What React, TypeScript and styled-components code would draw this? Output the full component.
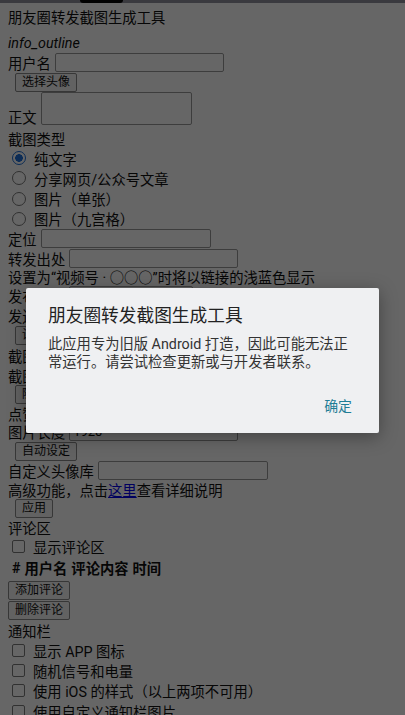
import styled, { createGlobalStyle } from "styled-components";

const GlobalStyle = createGlobalStyle`
  html, body {
    margin: 0;
    padding: 0;
    background: #ffffff;
    overflow: hidden;
  }
  body {
    font-family: Roboto, "Noto Sans CJK SC", sans-serif;
    font-size: 14.3px;
    color: #111111;
  }
`;

const radios = ["纯文字", "分享网页/公众号文章", "图片（单张）", "图片（九宫格）"];
const noticeOptions = [
  "显示 APP 图标",
  "随机信号和电量",
  "使用 iOS 的样式（以上两项不可用）",
  "使用自定义通知栏图片",
];

export default function App() {
  return (
    <>
      <GlobalStyle />
      <Page>
        <StatusStrip>
          <Notch />
        </StatusStrip>
        <Content>
          <Title>朋友圈转发截图生成工具</Title>
          <IconText>info_outline</IconText>

          <Row $h={19}>
            用户名<TextInput $w={169} />
          </Row>
          <Row $h={20}>
            <Button $indent={7}>选择头像</Button>
          </Row>
          <Row $h={36} $align="flex-end">
            <LabelLine>正文</LabelLine>
            <TextArea />
          </Row>

          <Row $h={20}>截图类型</Row>
          {radios.map((r, i) => (
            <Row key={r} $h={20.25}>
              <Radio type="radio" name="kind" defaultChecked={i === 0} />
              {r}
            </Row>
          ))}

          <Row $h={19.5}>
            定位<TextInput $w={170} />
          </Row>
          <Row $h={19.5}>
            转发出处<TextInput $w={169} />
          </Row>
          <Row $h={17}>设置为“视频号 · ○○○”时将以链接的浅蓝色显示</Row>
          <Row $h={20}>
            发布时间<TextInput $w={124} />
          </Row>
          <Row $h={20}>
            发送设备<TextInput $w={169} />
          </Row>
          <Row $h={20}>
            <Button $indent={7}>设为当前时间</Button>
          </Row>
          <Row $h={20}>
            截图时间<TextInput $w={124} />
          </Row>
          <Row $h={20}>
            截图电量<TextInput $w={169} />
          </Row>
          <Row $h={19}>
            <Button $indent={7}>随机生成</Button>
          </Row>
          <Row $h={18}>
            点赞列表<TextInput $w={169} />
          </Row>
          <Row $h={19}>
            图片长度<TextInput $w={169} defaultValue="1920" />
          </Row>
          <Row $h={20}>
            <Button $indent={7}>自动设定</Button>
          </Row>
          <Row $h={19}>
            自定义头像库<TextInput $w={170} />
          </Row>
          <Row $h={19}>
            高级功能，点击<Link href="#">这里</Link>查看详细说明
          </Row>
          <Row $h={19}>
            <Button $indent={7}>应用</Button>
          </Row>

          <Row $h={19}>评论区</Row>
          <Row $h={18}>
            <Checkbox type="checkbox" />
            显示评论区
          </Row>
          <TableHead>
            <span>#</span>
            <span>用户名</span>
            <span>评论内容</span>
            <span>时间</span>
          </TableHead>
          <Row $h={20}>
            <Button>添加评论</Button>
          </Row>
          <Row $h={20}>
            <Button>删除评论</Button>
          </Row>

          <Row $h={20}>通知栏</Row>
          {noticeOptions.map((o) => (
            <Row key={o} $h={20.3}>
              <Checkbox type="checkbox" />
              {o}
            </Row>
          ))}
        </Content>

        <Backdrop>
          <Dialog>
            <DialogTitle>朋友圈转发截图生成工具</DialogTitle>
            <DialogMessage>
              此应用专为旧版 Android 打造，因此可能无法正常运行。请尝试检查更新或与开发者联系。
            </DialogMessage>
            <DialogActions>
              <DialogButton>确定</DialogButton>
            </DialogActions>
          </Dialog>
        </Backdrop>
      </Page>
    </>
  );
}

const Page = styled.div`
  position: relative;
  width: 405px;
  height: 715px;
  overflow: hidden;
`;

const StatusStrip = styled.div`
  display: flex;
  height: 3px;
  background: #91919f;
`;

const Notch = styled.div`
  width: 43px;
  margin-left: 80px;
  background: #000;
  border-radius: 0 0 4px 4px;
`;

const Content = styled.div`
  padding: 0 8px;
`;

const Title = styled.div`
  margin-top: 5px;
  line-height: 20px;
`;

const IconText = styled.i`
  display: block;
  margin-top: 5px;
  line-height: 20px;
`;

const Row = styled.div<{ $h: number; $align?: string }>`
  display: flex;
  align-items: ${(p) => p.$align ?? "center"};
  height: ${(p) => p.$h}px;
  white-space: nowrap;
`;

const LabelLine = styled.span`
  line-height: 20px;
`;

const TextInput = styled.input<{ $w: number }>`
  box-sizing: border-box;
  width: ${(p) => p.$w}px;
  height: 19px;
  margin: 0 0 0 4px;
  padding: 0 3px;
  border: 1px solid #9a9a9a;
  border-radius: 2px;
  background: #fff;
  font-family: Roboto, "Noto Sans CJK SC", sans-serif;
  font-size: 13px;
  color: #111;
`;

const TextArea = styled.textarea`
  box-sizing: border-box;
  width: 151px;
  height: 33px;
  margin: 0 0 3px 4px;
  border: 1px solid #9a9a9a;
  border-radius: 2px;
  resize: none;
`;

const Button = styled.button<{ $indent?: number }>`
  box-sizing: border-box;
  height: 19px;
  margin: 0 0 0 ${(p) => p.$indent ?? 0}px;
  padding: 0 6px;
  border: 1px solid #8a8a8a;
  border-radius: 2px;
  background: #f4f4f4;
  font-family: Roboto, "Noto Sans CJK SC", sans-serif;
  font-size: 12px;
  line-height: 17px;
  color: #111;
`;

const Radio = styled.input`
  appearance: none;
  box-sizing: border-box;
  width: 14px;
  height: 14px;
  margin: 0 8px 0 4px;
  border: 1px solid #7a7a7a;
  border-radius: 50%;
  background: #fff;

  &:checked {
    border: 1.5px solid #1f6fd6;
    background: radial-gradient(circle, #1f6fd6 0 3.6px, #fff 4px);
  }
`;

const Checkbox = styled.input`
  appearance: none;
  box-sizing: border-box;
  width: 13px;
  height: 13px;
  margin: 0 8px 0 4px;
  border: 1px solid #7a7a7a;
  border-radius: 2px;
  background: #fff;
`;

const Link = styled.a`
  color: #0000ee;
  text-decoration: underline;
`;

const TableHead = styled.div`
  display: flex;
  gap: 4px;
  align-items: center;
  height: 25px;
  padding-left: 4px;
  font-weight: 700;
`;

const Backdrop = styled.div`
  position: absolute;
  inset: 0;
  display: flex;
  align-items: center;
  justify-content: center;
  padding-top: 6px;
  background: rgba(0, 0, 0, 0.6);
`;

const Dialog = styled.div`
  display: flex;
  flex-direction: column;
  width: 353px;
  height: 145px;
  background: #eff0f2;
  border-radius: 2px;
  box-shadow: 0 4px 18px rgba(0, 0, 0, 0.35);
`;

const DialogTitle = styled.div`
  padding: 17px 24px 0 22px;
  font-size: 17.7px;
  line-height: 22px;
  color: #222;
`;

const DialogMessage = styled.div`
  margin-top: 9px;
  padding: 0 27px 0 22px;
  font-size: 14.3px;
  line-height: 17.5px;
  color: #333;
`;

const DialogActions = styled.div`
  display: flex;
  justify-content: flex-end;
  margin-top: auto;
  padding: 0 27px 10px;
`;

const DialogButton = styled.button`
  height: 36px;
  padding: 0;
  border: none;
  background: none;
  font-family: Roboto, "Noto Sans CJK SC", sans-serif;
  font-size: 13.9px;
  color: #1f7d96;
`;
